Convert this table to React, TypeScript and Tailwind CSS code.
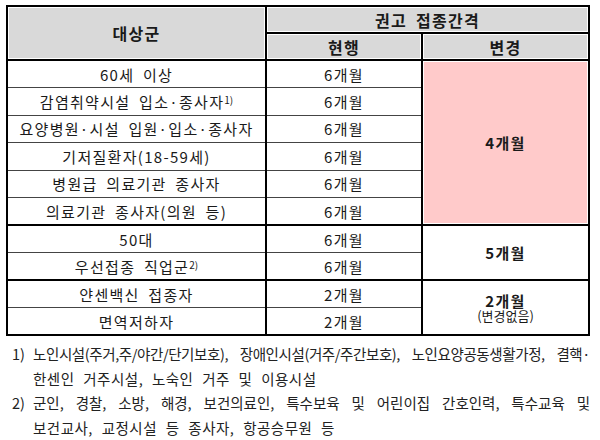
import React from "react";

const font = { fontFamily: '"Noto Sans CJK KR", "Noto Sans", sans-serif' };

const rows: { name: React.ReactNode; cur: string }[] = [
  { name: "60세 이상", cur: "6개월" },
  { name: <>감염취약시설 입소·종사자<sup className="text-[10px] relative -top-[4px] tracking-normal">1)</sup></>, cur: "6개월" },
  { name: "요양병원·시설 입원·입소·종사자", cur: "6개월" },
  { name: "기저질환자(18-59세)", cur: "6개월" },
  { name: "병원급 의료기관 종사자", cur: "6개월" },
  { name: "의료기관 종사자(의원 등)", cur: "6개월" },
  { name: "50대", cur: "6개월" },
  { name: <>우선접종 직업군<sup className="text-[10px] relative -top-[4px] tracking-normal">2)</sup></>, cur: "6개월" },
  { name: "얀센백신 접종자", cur: "2개월" },
  { name: "면역저하자", cur: "2개월" },
];

const head = "border-2 border-black bg-[#d9d9d9] shadow-[inset_0_0_0_1px_white] font-bold text-[16px]";

export default function App() {
  return (
    <div className="w-[600px] h-[440px] bg-white text-[#1a1a1a] overflow-hidden" style={font}>
      <div className="pl-[6px] pt-[5px]">
        <table className="border-collapse border-2 border-black w-[582px] text-[15px] leading-none tracking-[1.3px] [word-spacing:4px] table-fixed">
          <colgroup>
            <col className="w-[259px]" />
            <col className="w-[156px]" />
            <col className="w-[167px]" />
          </colgroup>
          <thead>
            <tr className="h-[27px]">
              <th rowSpan={2} className={head}>대상군</th>
              <th colSpan={2} className={head}>권고 접종간격</th>
            </tr>
            <tr className="h-[27px]">
              <th className={head}>현행</th>
              <th className={head}>변경</th>
            </tr>
          </thead>
          <tbody>
            {rows.map((r, i) => {
              const thick = i === 5 || i === 7;
              const rowB = thick ? "border-b-2 border-b-black" : "border-b border-b-[#444]";
              return (
                <tr key={i} className="h-[27.5px]">
                  <td className={`border-r-2 border-r-black ${rowB} text-center whitespace-nowrap`}>{r.name}</td>
                  <td className={`border-r-2 border-r-black ${rowB} text-center`}>{r.cur}</td>
                  {i === 0 && (
                    <td rowSpan={6} className="border-b-2 border-b-black bg-[#ffcaca] shadow-[inset_0_0_0_1px_white] text-center font-bold align-middle">4개월</td>
                  )}
                  {i === 6 && (
                    <td rowSpan={2} className="border-b-2 border-b-black text-center font-bold">5개월</td>
                  )}
                  {i === 8 && (
                    <td rowSpan={2} className="text-center">
                      <div className="flex flex-col items-center leading-none">
                        <span className="font-bold">2개월</span>
                        <span className="text-[13px] tracking-normal mt-[1px]">(변경없음)</span>
                      </div>
                    </td>
                  )}
                </tr>
              );
            })}
          </tbody>
        </table>
      </div>
      <div className="mt-[6px] pl-[12px] pr-[10px] text-[14.5px] leading-[24.7px] text-[#222]">
        <div className="flex">
          <span className="w-[21px] shrink-0">1)</span>
          <div className="flex-1">
            <div className="text-justify [text-align-last:justify] whitespace-nowrap tracking-[-0.4px]">노인시설(주거,주/야간/단기보호), 장애인시설(거주/주간보호), 노인요양공동생활가정, 결핵·</div>
            <div className="[word-spacing:5px] tracking-[0.5px]">한센인 거주시설, 노숙인 거주 및 이용시설</div>
          </div>
        </div>
        <div className="flex">
          <span className="w-[21px] shrink-0">2)</span>
          <div className="flex-1">
            <div className="text-justify [text-align-last:justify]">군인, 경찰, 소방, 해경, 보건의료인, 특수보육 및 어린이집 간호인력, 특수교육 및</div>
            <div className="[word-spacing:5px] tracking-[0.5px]">보건교사, 교정시설 등 종사자, 항공승무원 등</div>
          </div>
        </div>
      </div>
    </div>
  );
}
